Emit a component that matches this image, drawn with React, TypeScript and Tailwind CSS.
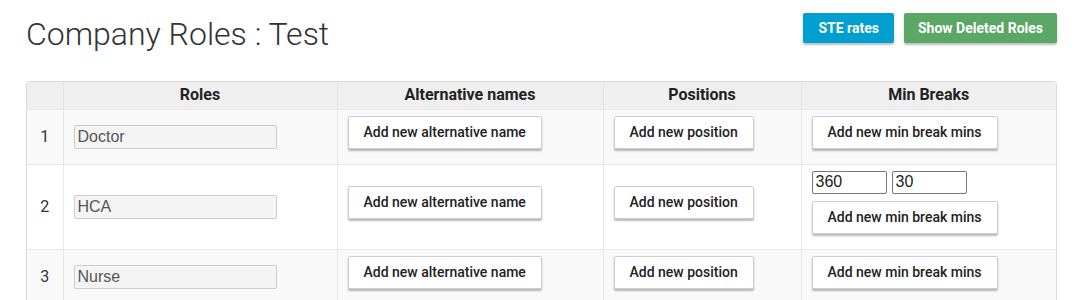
const roles = [
  { id: 1, name: "Doctor", breaks: [] as [string, string][] },
  { id: 2, name: "HCA", breaks: [["360", "30"]] as [string, string][] },
  { id: 3, name: "Nurse", breaks: [] as [string, string][] },
];

const AddButton = ({ label }: { label: string }) => (
  <button className="mb-[10px] h-[33px] px-[15px] bg-white border border-[#cfcfcf] rounded-[2px] shadow-[0_2px_2px_rgba(0,0,0,0.28)] text-[14px] font-medium text-[#222]">
    {label}
  </button>
);

const App = () => {
  return (
    <div className="w-[1080px] h-[300px] bg-white overflow-hidden font-['Roboto',sans-serif]">
      <div className="flex items-start justify-between pl-[26px] pr-[23px] pt-[13px]">
        <h1 className="text-[32px] leading-[40px] font-light text-[#333] mt-[1px]">Company Roles : Test</h1>
        <div className="flex gap-[10px]">
          <button className="h-[30px] px-[15px] rounded-[2px] bg-[#009fcf] text-white text-[14px] font-bold shadow-[0_2px_2px_rgba(0,0,0,0.25)]">
            STE rates
          </button>
          <button className="h-[30px] px-[14px] rounded-[2px] bg-[#5ba765] text-white text-[14px] font-bold shadow-[0_2px_2px_rgba(0,0,0,0.25)]">
            Show Deleted Roles
          </button>
        </div>
      </div>

      <div className="ml-[26px] mt-[27px] w-[1031px] border border-[#d9d9d9] rounded-[4px] overflow-hidden">
        <table className="w-full border-collapse table-fixed">
          <colgroup>
            <col className="w-[36px]" />
            <col className="w-[274px]" />
            <col className="w-[266px]" />
            <col className="w-[198px]" />
            <col />
          </colgroup>
          <thead>
            <tr className="bg-[#efefef] h-[27px]">
              <th className="border-r border-[#e3e3e3]"></th>
              <th className="border-r border-[#e3e3e3] text-[16px] font-bold text-[#222]">Roles</th>
              <th className="border-r border-[#e3e3e3] text-[16px] font-bold text-[#222]">Alternative names</th>
              <th className="border-r border-[#e3e3e3] text-[16px] font-bold text-[#222]">Positions</th>
              <th className="text-[16px] font-bold text-[#222]">Min Breaks</th>
            </tr>
          </thead>
          <tbody>
            {roles.map((r, i) => (
              <tr key={r.id} className={i % 2 === 0 ? "bg-[#f9f9f9]" : "bg-white"}>
                <td className="border-r border-t border-[#e8e8e8] text-center text-[16px] text-[#333] align-middle">
                  {r.id}
                </td>
                <td className="border-r border-t border-[#e8e8e8] pl-[10px] align-middle">
                  <input
                    readOnly
                    value={r.name}
                    className="w-[203px] h-[24px] px-[3px] bg-[#f4f4f4] border border-[#cccccc] rounded-[2px] text-[16px] text-[#555] font-['Liberation_Sans',Arial,sans-serif] outline-none"
                  />
                </td>
                <td className="border-r border-t border-[#e8e8e8] pl-[10px] pt-[6px] pb-[5px] align-middle">
                  <AddButton label="Add new alternative name" />
                </td>
                <td className="border-r border-t border-[#e8e8e8] pl-[10px] pt-[6px] pb-[5px] align-middle">
                  <AddButton label="Add new position" />
                </td>
                <td className="border-t border-[#e8e8e8] pl-[10px] pt-[6px] pb-[5px] align-middle">
                  {r.breaks.map(([a, b], j) => (
                    <div key={j} className="flex gap-[5px] mb-[7px]">
                      <input
                        readOnly
                        value={a}
                        className="w-[75px] h-[23px] px-[3px] bg-white border border-[#767676] rounded-[2px] text-[16px] text-[#222] font-['Liberation_Sans',Arial,sans-serif] outline-none"
                      />
                      <input
                        readOnly
                        value={b}
                        className="w-[75px] h-[23px] px-[3px] bg-white border border-[#767676] rounded-[2px] text-[16px] text-[#222] font-['Liberation_Sans',Arial,sans-serif] outline-none"
                      />
                    </div>
                  ))}
                  <AddButton label="Add new min break mins" />
                </td>
              </tr>
            ))}
          </tbody>
        </table>
      </div>
    </div>
  );
};

export default App;
